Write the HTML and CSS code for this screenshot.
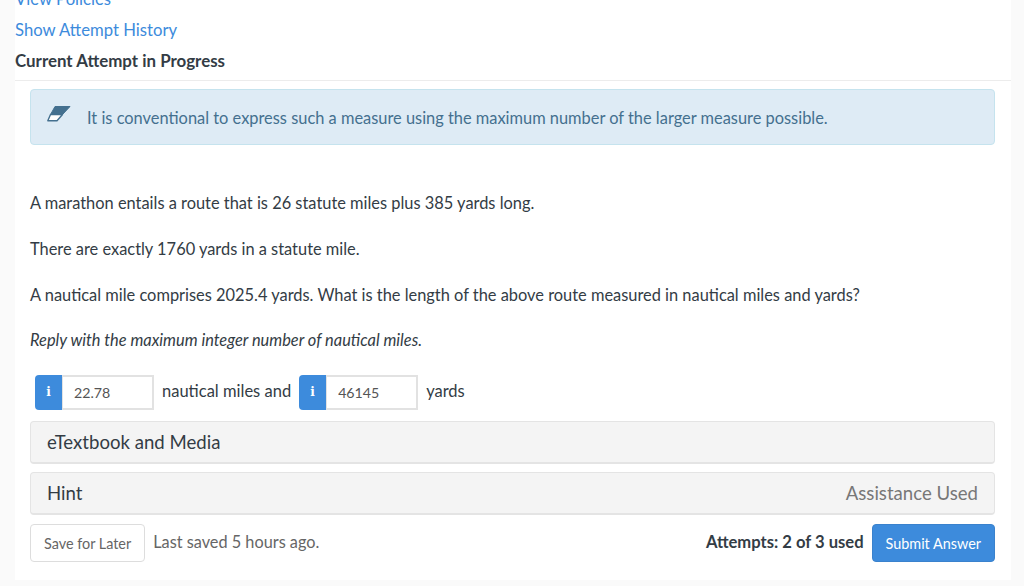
FILE: index.html
```html
<!DOCTYPE html>
<html>
<head>
    <title>Current Attempt in Progress</title>
    <link rel="stylesheet" href="styles.css">
</head>
<body>
    <div class="page">
        <div class="links">
            <a href="#">View Policies</a>
            <a href="#">Show Attempt History</a>
        </div>
        <h4 class="attempt-title">Current Attempt in Progress</h4>

        <div class="question">
            <div class="alert">
                <svg class="eraser" width="24" height="16" viewBox="0 0 24 16">
                    <path d="M8 .5H23L15.5 8.5H3.5Z" fill="#44708f" stroke="#44708f" stroke-linejoin="round"/>
                    <path d="M3.5 8.5H15.5L10 14.7H.8Z" fill="#fff" stroke="#44708f" stroke-width="1.4" stroke-linejoin="round"/>
                </svg>
                <span class="alert-text">It is conventional to express such a measure using the maximum number of the larger measure possible.</span>
            </div>

            <div class="text">
                <p>A marathon entails a route that is 26 statute miles plus 385 yards long.</p>
                <p>There are exactly 1760 yards in a statute mile.</p>
                <p>A nautical mile comprises 2025.4 yards. What is the length of the above route measured in nautical miles and yards?</p>
                <p class="note"><em>Reply with the maximum integer number of nautical miles.</em></p>
            </div>

            <div class="answers">
                <div class="input-group">
                    <span class="info">i</span>
                    <input class="answer" type="text" value="22.78">
                </div>
                <span class="unit">nautical miles and</span>
                <div class="input-group">
                    <span class="info">i</span>
                    <input class="answer" type="text" value="46145">
                </div>
                <span class="unit">yards</span>
            </div>

            <div class="bar">eTextbook and Media</div>
            <div class="bar">
                <span>Hint</span>
                <span class="muted">Assistance Used</span>
            </div>

            <div class="footer">
                <div class="footer-side">
                    <button class="btn">Save for Later</button>
                    <span class="saved">Last saved 5 hours ago.</span>
                </div>
                <div class="footer-side">
                    <strong class="attempts">Attempts: 2 of 3 used</strong>
                    <button class="btn btn-primary">Submit Answer</button>
                </div>
            </div>
        </div>
    </div>
</body>
</html>
```

FILE: styles.css
```css
html, body {
    height: 586px;
    overflow: hidden;
}
body {
    margin: 0;
    background-color: #fafafa;
    color: #333c45;
    font-family: Lato, 'Open Sans', sans-serif;
    font-size: 16.4px;
    line-height: 24px;
}
.page {
    width: 996px;
    height: 593px;
    margin: -13px 0 0 15px;
    background-color: #fff;
    box-sizing: border-box;
}
.links {
    display: flex;
    flex-direction: column;
    gap: 7px;
    font-size: 16.7px;
}
.links a {
    color: #3d8bdc;
    text-decoration: none;
}
.attempt-title {
    margin: 7px 0 0;
    padding-bottom: 7px;
    border-bottom: 1px solid #ececec;
    font-size: 16.9px;
    font-weight: 700;
}
.question {
    padding: 8px 16px 0 15px;
}
.alert {
    display: flex;
    align-items: center;
    gap: 16px;
    height: 56px;
    padding: 0 16px;
    box-sizing: border-box;
    background-color: #deebf5;
    border: 1px solid #c5e3ee;
    border-radius: 4px;
    color: #44708f;
}
.alert-text {
    padding-top: 1px;
}
.eraser {
    flex: none;
    margin-top: -7px;
}
.text {
    padding-top: 46px;
}
.text p {
    margin: 0 0 22px;
}
.text .note {
    margin-top: -1px;
    margin-bottom: 23px;
}
.answers {
    display: flex;
    align-items: center;
    gap: 8px;
    margin: 23px 0 11px 5px;
    height: 35px;
    font-size: 16.5px;
}
.unit {
    margin-bottom: 3px;
}
.input-group {
    display: flex;
    height: 35px;
}
.info {
    width: 27px;
    background-color: #3d8bdc;
    border-radius: 4px 0 0 4px;
    color: #fff;
    font-family: 'DejaVu Serif', serif;
    font-size: 12px;
    font-weight: 700;
    line-height: 35px;
    text-align: center;
}
.answer {
    width: 92px;
    height: 35px;
    padding: 0 0 0 11px;
    box-sizing: border-box;
    border: 2px solid #e2e2e2;
    border-left-width: 1px;
    border-radius: 0;
    outline: none;
    color: #555;
    font-family: Lato, sans-serif;
    font-size: 14.2px;
}
.bar {
    display: flex;
    justify-content: space-between;
    align-items: center;
    height: 43px;
    margin-bottom: 8px;
    padding: 0 16px;
    box-sizing: border-box;
    background-color: #f4f4f4;
    border: 1px solid #e4e4e4;
    border-bottom-width: 2px;
    border-radius: 4px;
    font-size: 18.6px;
}
.muted {
    color: #777;
}
.footer {
    display: flex;
    justify-content: space-between;
    align-items: center;
    margin-top: 9px;
}
.footer-side {
    display: flex;
    align-items: center;
    gap: 8px;
}
.btn {
    height: 38px;
    padding: 0 13px;
    background-color: #fff;
    border: 1px solid #ddd;
    border-radius: 4px;
    color: #666;
    font-family: Lato, sans-serif;
    font-size: 14.4px;
}
.btn-primary {
    background-color: #3d8bdc;
    border-color: #3a82cd;
    color: #fff;
}
.saved {
    color: #666;
    font-size: 16.3px;
}
.attempts {
    font-size: 16.6px;
}
.attempts,
.saved {
    margin-top: -3px;
}
```
